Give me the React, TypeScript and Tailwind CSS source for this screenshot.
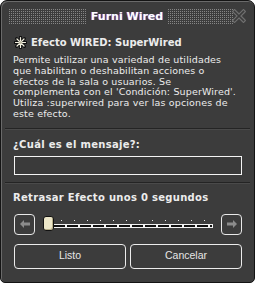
export default function App() {
  const ticks = Array.from({ length: 12 }, (_, i) => i);

  return (
    <div className="w-[255px] h-[283px] bg-[#3c3c3c] rounded-t-[7px] rounded-b-[5px] border border-[#141414] shadow-[inset_1px_1px_0_#6a6a6a] flex flex-col text-[#ececec] font-['DejaVu_Sans',sans-serif] overflow-hidden">
      {/* Title bar */}
      <div className="h-[29px] flex items-center pl-[7px] pr-[8px] pt-[1px]">
        <div className="flex-1 h-[16px] bg-[conic-gradient(from_90deg,#858585_25%,transparent_0)] bg-[length:2px_2px]" />
        <div className="px-[4px] text-[11px] font-bold leading-none text-white [text-shadow:1px_0_0_#3a4aa0,-1px_0_0_#a04040]">
          Furni Wired
        </div>
        <div className="flex-1 flex items-center">
          <div className="flex-1 h-[16px] bg-[conic-gradient(from_90deg,#858585_25%,transparent_0)] bg-[length:2px_2px]" />
          <svg width="14" height="14" viewBox="0 0 14 14" className="-ml-[2px]">
            <path d="M2.5 2.5 L11.5 11.5 M11.5 2.5 L2.5 11.5" stroke="#6e6e6e" strokeWidth="4" strokeLinecap="square" />
            <path d="M2.5 2.5 L11.5 11.5 M11.5 2.5 L2.5 11.5" stroke="#3c3c3c" strokeWidth="1.6" strokeLinecap="square" />
          </svg>
        </div>
      </div>

      <div className="flex flex-col px-[11px]">
        {/* Heading */}
        <div className="flex items-center gap-[4px] mt-[6px] ml-[2px]">
          <svg width="13" height="13" viewBox="0 0 13 13">
            <g stroke="#111" strokeWidth="3" strokeLinecap="round">
              <path d="M6.5 1 V12 M1 6.5 H12 M2.6 2.6 L10.4 10.4 M10.4 2.6 L2.6 10.4" />
            </g>
            <g stroke="#f4f1e0" strokeWidth="1.2" strokeLinecap="round">
              <path d="M6.5 1.5 V11.5 M1.5 6.5 H11.5 M3 3 L10 10 M10 3 L3 10" />
            </g>
            <circle cx="6.5" cy="6.5" r="1.6" fill="#bdb9a4" />
          </svg>
          <span className="text-[10px] font-bold leading-none">Efecto WIRED: SuperWired</span>
        </div>

        <p className="mt-[6px] ml-[1px] text-[9.5px] leading-[10.8px] tracking-[0.15px] whitespace-nowrap">
          Permite utilizar una variedad de utilidades
          <br />
          que habilitan o deshabilitan acciones o
          <br />
          efectos de la sala o usuarios. Se
          <br />
          complementa con el 'Condición: SuperWired'.
          <br />
          Utiliza :superwired para ver las opciones de
          <br />
          este efecto.
        </p>
      </div>

      <div className="mx-[4px] mt-[8px] h-[1px] bg-[#242424] shadow-[0_1px_0_#4a4a4a]" />

      <div className="flex flex-col px-[12px]">
        <div className="mt-[11px] text-[10px] tracking-[0.3px] font-bold leading-none">¿Cuál es el mensaje?:</div>
        <div className="mt-[6px] ml-[1px] h-[19px] border border-[#f4f4f4] bg-[#3a3a3a]" />
      </div>

      <div className="mx-[4px] mt-[7px] h-[1px] bg-[#242424] shadow-[0_1px_0_#4a4a4a]" />

      <div className="flex flex-col px-[12px]">
        <div className="mt-[10px] text-[10px] tracking-[0.3px] font-bold leading-none">Retrasar Efecto unos 0 segundos</div>

        {/* Slider */}
        <div className="mt-[11px] ml-[1px] flex items-center h-[21px]">
          <div className="w-[21px] h-[21px] rounded-[4px] border border-[#e8e8e8] flex items-center justify-center">
            <svg width="10" height="8" viewBox="0 0 10 8">
              <path d="M0 4 L4 0 V2.5 H10 V5.5 H4 V8 Z" fill="#8c8c8c" />
            </svg>
          </div>
          <div className="flex-1 relative h-[21px] mx-[8px]">
            <div className="absolute left-[10px] right-[0px] top-[10px] h-[4px] bg-[#f2f2f2] flex items-center px-[1px]">
              <div className="w-full h-[2px] bg-[repeating-linear-gradient(90deg,#111_0,#111_11px,transparent_11px,transparent_13px)]" />
            </div>
            <div className="absolute left-[10px] right-[8px] top-[6px] flex justify-between pl-[8px]">
              {ticks.map((t) => (
                <div key={t} className="w-[1px] h-[1px] bg-[#e8e8e8]" />
              ))}
            </div>
            <div className="absolute left-0 top-[2px] w-[11px] h-[15px] rounded-[3px] bg-[#ece6c8] border border-[#111] shadow-[inset_-1px_-1px_0_#b6ae88]" />
          </div>
          <div className="w-[21px] h-[21px] rounded-[4px] border border-[#e8e8e8] flex items-center justify-center">
            <svg width="10" height="8" viewBox="0 0 10 8">
              <path d="M10 4 L6 0 V2.5 H0 V5.5 H6 V8 Z" fill="#8c8c8c" />
            </svg>
          </div>
        </div>

        {/* Buttons */}
        <div className="mt-[9px] ml-[1px] grid grid-cols-2 gap-[4px]">
          <button className="h-[25px] rounded-[4px] border border-[#ececec] text-[10.5px] text-[#e6e6e6] font-['Liberation_Sans',sans-serif]">
            Listo
          </button>
          <button className="h-[25px] rounded-[4px] border border-[#ececec] text-[10.5px] text-[#e6e6e6] font-['Liberation_Sans',sans-serif]">
            Cancelar
          </button>
        </div>
      </div>
    </div>
  );
}
